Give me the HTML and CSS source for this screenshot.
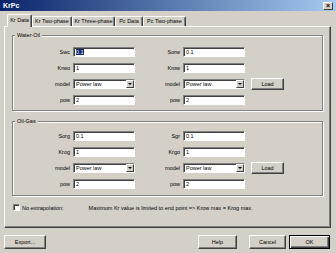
FILE: index.html
```html
<!DOCTYPE html>
<html>
<head>
    <title>KrPc</title>
    <link rel="stylesheet" href="styles.css">
</head>
<body>
    <div class="window">
        <div class="titlebar">
            <span class="title">KrPc</span>
            <span class="close">&times;</span>
        </div>

        <div class="tabs">
            <div class="tab active w25">Kr Data</div>
            <div class="tab w40">Kr Two-phase</div>
            <div class="tab w43">Kr Three-phase</div>
            <div class="tab w28">Pc Data</div>
            <div class="tab w43">Pc Two-phase</div>
        </div>

        <div class="panel">
            <fieldset class="group first">
                <legend>Water-Oil</legend>
                <div class="rows">
                    <div class="row">
                        <label>Swc</label><div class="input"><span class="sel">0.1</span></div>
                        <label>Sorw</label><div class="input">0.1</div>
                    </div>
                    <div class="row">
                        <label>Krwo</label><div class="input">1</div>
                        <label>Krow</label><div class="input">1</div>
                    </div>
                    <div class="row">
                        <label>model</label><div class="select"><span>Power law</span><span class="arrow"></span></div>
                        <label>model</label><div class="select"><span>Power law</span><span class="arrow"></span></div>
                        <button class="btn load">Load</button>
                    </div>
                    <div class="row">
                        <label>pow</label><div class="input">2</div>
                        <label>pow</label><div class="input">2</div>
                    </div>
                </div>
            </fieldset>

            <fieldset class="group second">
                <legend>Oil-Gas</legend>
                <div class="rows">
                    <div class="row">
                        <label>Sorg</label><div class="input">0.1</div>
                        <label>Sgr</label><div class="input">0.1</div>
                    </div>
                    <div class="row">
                        <label>Krog</label><div class="input">1</div>
                        <label>Krgo</label><div class="input">1</div>
                    </div>
                    <div class="row">
                        <label>model</label><div class="select"><span>Power law</span><span class="arrow"></span></div>
                        <label>model</label><div class="select"><span>Power law</span><span class="arrow"></span></div>
                        <button class="btn load">Load</button>
                    </div>
                    <div class="row">
                        <label>pow</label><div class="input">2</div>
                        <label>pow</label><div class="input">2</div>
                    </div>
                </div>
            </fieldset>

            <div class="options">
                <span class="checkbox"></span>
                <span class="check-label">No extrapolation:</span>
                <span class="note">Maximum Kr value is limited to end point =&gt; Krow max = Krog max.</span>
            </div>
        </div>

        <div class="buttons">
            <button class="btn export">Export...</button>
            <button class="btn help">Help</button>
            <button class="btn cancel">Cancel</button>
            <button class="btn ok">OK</button>
        </div>
    </div>
</body>
</html>
```

FILE: styles.css
```css
* {
    box-sizing: border-box;
}

body {
    margin: 0;
    font-family: "Liberation Sans", Arial, sans-serif;
    font-size: 5.5px;
    color: #000;
    background-color: #d4d0c8;
}

.window {
    width: 336px;
    height: 253px;
    overflow: hidden;
    background-color: #d4d0c8;
}

/* title bar */
.titlebar {
    height: 11px;
    padding: 0 3px;
    display: flex;
    align-items: center;
    justify-content: space-between;
    background: linear-gradient(to right, #0a246a, #a6caf0);
}

.title {
    color: #fff;
    font-weight: bold;
    font-size: 7px;
}

.close {
    width: 10px;
    height: 8px;
    background-color: #d4d0c8;
    border: 1px solid;
    border-color: #fff #404040 #404040 #fff;
    font-size: 7px;
    line-height: 6px;
    text-align: center;
    font-weight: bold;
}

/* tabs */
.tabs {
    position: relative;
    display: flex;
    align-items: flex-end;
    height: 13px;
    margin: 3px 0 -1px 7px;
}

.tab {
    height: 10px;
    margin-bottom: 1px;
    border: 1px solid;
    border-bottom: none;
    border-color: #fff #404040 #404040 #fff;
    border-radius: 2px 2px 0 0;
    box-shadow: inset -1px 0 0 #808080;
    line-height: 9px;
    text-align: center;
    white-space: nowrap;
    background-color: #d4d0c8;
}

.tab.active {
    height: 13px;
    margin-bottom: 0;
    line-height: 11px;
}

.w25 { width: 25px; }
.w28 { width: 28px; }
.w40 { width: 40px; }
.w43 { width: 43px; }

/* tab page */
.panel {
    width: 327px;
    height: 202px;
    margin-left: 4px;
    padding: 4px 0 0 7px;
    border: 1px solid;
    border-color: #fff #404040 #404040 #fff;
    box-shadow: inset -1px -1px 0 #808080;
}

.group {
    width: 311px;
    min-width: 0;
    margin: 0;
    border: 1px solid #808080;
    box-shadow: 1px 1px 0 #fff, inset 1px 1px 0 #fff;
}

.group.first {
    padding: 7px 0 5px 0;
}

.group.second {
    margin-top: 6px;
    padding: 5px 0 6px 0;
}

.group legend {
    height: 9px;
    line-height: 9px;
    margin-left: 2px;
    padding: 0 2px;
    background-color: #d4d0c8;
}

.rows {
    display: flex;
    flex-direction: column;
    gap: 6px;
}

.row {
    display: grid;
    grid-template-columns: 57px 62px 42px 62px 36px;
    column-gap: 3px;
    height: 10px;
}

.row label {
    text-align: right;
    line-height: 10px;
    white-space: nowrap;
}

.input,
.select {
    height: 10px;
    padding-left: 2px;
    background-color: #fff;
    border: 1px solid;
    border-color: #808080 #fff #fff #808080;
    box-shadow: inset 1px 1px 0 #404040;
    line-height: 8px;
    white-space: nowrap;
}

.sel {
    background-color: #0a246a;
    color: #fff;
}

.select {
    display: flex;
    justify-content: space-between;
    padding-right: 0;
}

.arrow {
    width: 8px;
    height: 8px;
    margin-top: 0;
    background-color: #d4d0c8;
    border: 1px solid;
    border-color: #fff #404040 #404040 #fff;
    display: flex;
    align-items: center;
    justify-content: center;
}

.arrow::after {
    content: "";
    border-left: 2px solid transparent;
    border-right: 2px solid transparent;
    border-top: 2px solid #000;
}

/* buttons */
.btn {
    height: 14px;
    padding: 0;
    font-family: inherit;
    font-size: 5.5px;
    color: #000;
    background-color: #d4d0c8;
    border: 1px solid;
    border-color: #fff #404040 #404040 #fff;
    box-shadow: inset -1px -1px 0 #808080;
}

.btn.load {
    width: 33px;
    height: 12px;
    margin: -1px 0 0 3px;
}

/* options line */
.options {
    display: flex;
    align-items: center;
    height: 7px;
    margin-top: 8px;
    white-space: nowrap;
}

.checkbox {
    width: 7px;
    height: 7px;
    margin-left: 1px;
    background-color: #fff;
    border: 1px solid;
    border-color: #808080 #fff #fff #808080;
    box-shadow: inset 1px 1px 0 #404040;
}

.check-label {
    margin-left: 2px;
}

.note {
    margin-left: 25px;
}

/* dialog buttons */
.buttons {
    display: flex;
    margin-top: 7px;
}

.export {
    width: 42px;
    margin-left: 4px;
}

.help {
    width: 39px;
    margin-left: auto;
}

.cancel {
    width: 37px;
    margin-left: 12px;
}

.ok {
    width: 41px;
    margin: 0 6px 0 3px;
    border: 1px solid #000;
    box-shadow: inset 1px 1px 0 #fff, inset -1px -1px 0 #404040, inset -2px -2px 0 #808080;
}
```
